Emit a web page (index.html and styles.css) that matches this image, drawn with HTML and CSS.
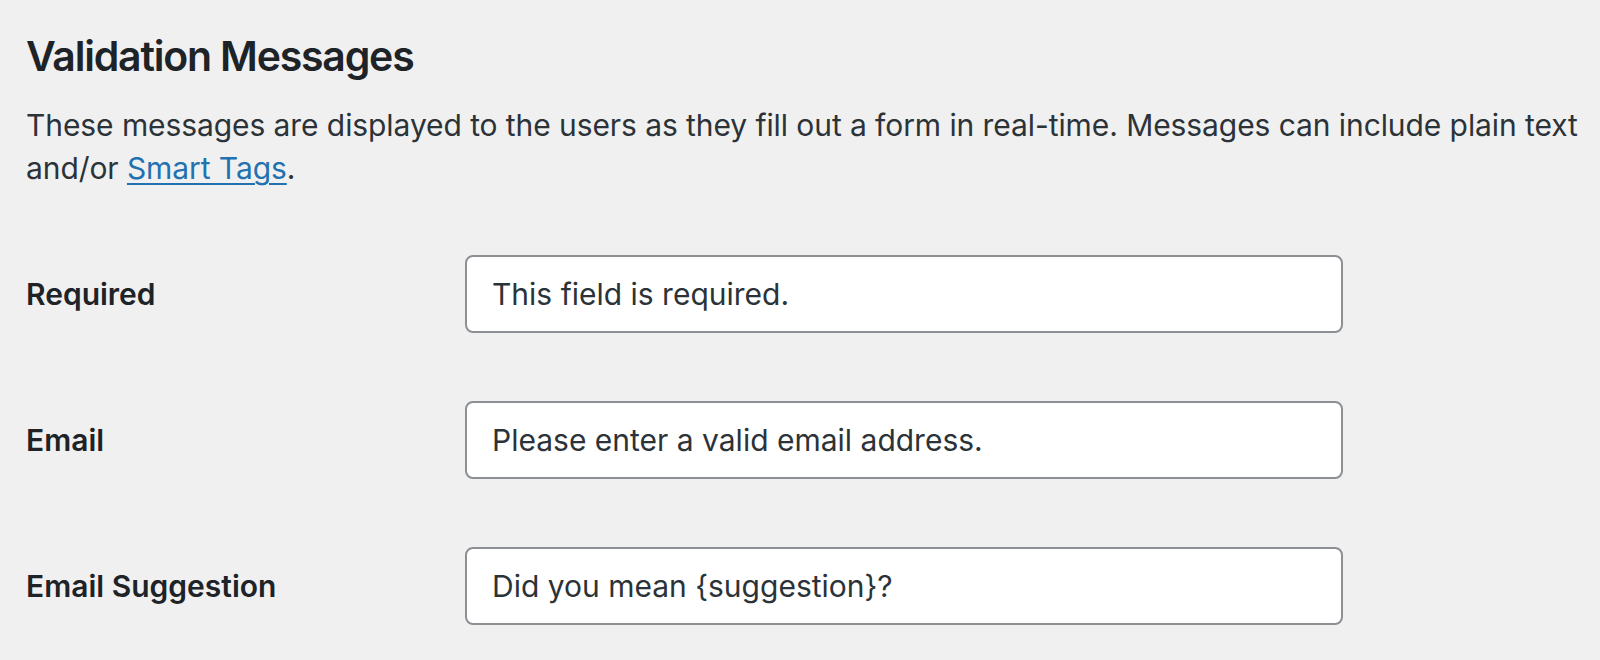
FILE: index.html
```html
<!DOCTYPE html>
<html lang="en">
  <head>
    <meta charset="UTF-8" />
    <meta name="viewport" content="width=device-width, initial-scale=1.0" />
    <title>Validation Messages</title>
    <link rel="stylesheet" href="styles.css">
  </head>
  <body>
    <div class="wrap">
      <h2 class="section-title">Validation Messages</h2>
      <p class="section-desc">
        These messages are displayed to the users as they fill out a form in real-time. Messages can include plain text and/or <a href="#">Smart Tags</a>.
      </p>

      <div class="field-list">
        <div class="field-row">
          <label class="field-label" for="msgRequired">Required</label>
          <input id="msgRequired" class="field-input" type="text" value="This field is required." />
        </div>
        <div class="field-row">
          <label class="field-label" for="msgEmail">Email</label>
          <input id="msgEmail" class="field-input" type="text" value="Please enter a valid email address." />
        </div>
        <div class="field-row">
          <label class="field-label" for="msgSuggestion">Email Suggestion</label>
          <input id="msgSuggestion" class="field-input" type="text" value="Did you mean {suggestion}?" />
        </div>
      </div>
    </div>
  </body>
</html>
```

FILE: styles.css
```css
html,
body {
  margin: 0;
  padding: 0;
  background: #f0f0f1;
}
body {
  font-family: Inter, "Noto Sans", sans-serif;
  color: #2c3338;
}
.wrap {
  padding: 32px 6px 0 26px;
}
.section-title {
  margin: 0;
  font-size: 41px;
  line-height: 1.2;
  font-weight: 600;
  letter-spacing: -1.2px;
  color: #1d2327;
}
.section-desc {
  margin: 23px 0 0;
  font-size: 30px;
  line-height: 43.3px;
  letter-spacing: -0.08px;
}
.section-desc a {
  color: #2271b1;
  text-decoration: underline;
  text-underline-offset: 4px;
  text-decoration-thickness: 2px;
}
.field-list {
  margin-top: 64px;
  display: flex;
  flex-direction: column;
  gap: 68px;
}
.field-row {
  display: flex;
  align-items: center;
}
.field-label {
  width: 439px;
  font-size: 30px;
  font-weight: 600;
  color: #1d2327;
}
.field-input {
  box-sizing: border-box;
  width: 878px;
  height: 78px;
  margin: 0;
  padding: 0 25px;
  border: 2px solid #8c8f94;
  border-radius: 8px;
  background: #fff;
  font-family: inherit;
  font-size: 30px;
  color: #2c3338;
  outline: none;
}
```
